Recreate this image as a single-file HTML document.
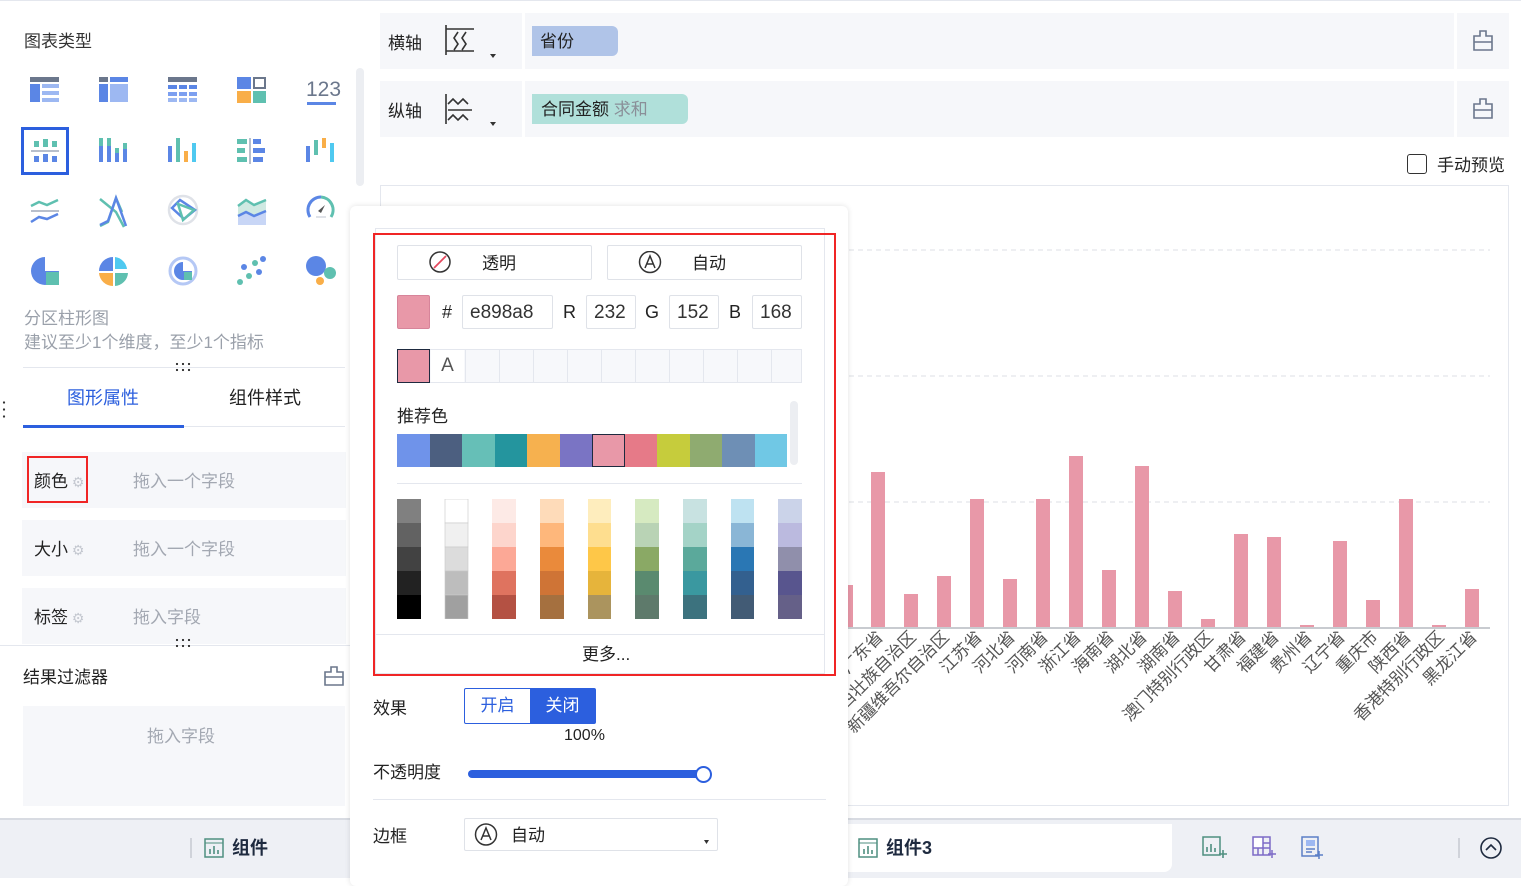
<!DOCTYPE html>
<html><head><meta charset="utf-8"><style>
*{margin:0;padding:0;box-sizing:border-box}
body{width:1521px;height:878px;overflow:hidden;background:#fff;font-family:"Liberation Sans","Noto Sans CJK SC",sans-serif;color:#222;position:relative;font-size:16px}
.a{position:absolute}
.g{color:#9aa0aa}
.inp{position:absolute;border:1px solid #dfe2e8;border-radius:2px;background:#fff;font-size:19px;color:#333;padding-left:7px;line-height:34px;height:34px}
.sw{position:absolute;width:33px;height:34px}
.dots{position:absolute;width:18px;height:12px;background:radial-gradient(circle,#333 1px,transparent 1.3px) 0 0/6px 6px}
</style></head><body>
<div class="a" style="left:0;top:0;width:1521px;height:1px;background:#e4e7ee"></div>
<div class="a" style="left:24px;top:27px;font-size:17px;color:#333">图表类型</div>
<div class="a" style="left:356px;top:68px;width:8px;height:118px;border-radius:4px;background:#eceef2"></div>
<svg class="a" style="left:0;top:60px" width="350" height="240">
<g transform="translate(30,17)"><rect width="29" height="5" fill="#6b778c"/><rect y="7" width="10" height="18" fill="#5b86e5"/><rect x="12" y="7" width="17" height="4" fill="#9db8f2"/><rect x="12" y="14" width="17" height="4" fill="#9db8f2"/><rect x="12" y="21" width="17" height="4" fill="#9db8f2"/></g>
<g transform="translate(99,17)"><rect width="9" height="5" fill="#6b778c"/><rect x="11" width="18" height="5" fill="#5b86e5"/><rect y="7" width="9" height="18" fill="#5b86e5"/><rect x="11" y="7" width="18" height="18" fill="#9db8f2"/></g>
<g transform="translate(168,17)"><rect width="29" height="5" fill="#6b778c"/><rect y="8" width="29" height="4" fill="#5b86e5"/><rect y="15" width="29" height="4" fill="#7c9ff0"/><rect y="21" width="29" height="4" fill="#9db8f2"/><rect x="9" y="7" width="2" height="18" fill="#fff"/><rect x="19" y="7" width="2" height="18" fill="#fff"/></g>
<g transform="translate(237,17)"><rect width="14" height="12" fill="#5b86e5"/><rect x="17" y="1" width="11" height="10" fill="none" stroke="#6b778c" stroke-width="2"/><rect y="14" width="14" height="12" fill="#f9ae48"/><rect x="16" y="14" width="13" height="12" fill="#5fc0b0"/></g>
<text x="306" y="36" font-size="21" fill="#6b778c" font-family="Liberation Sans">123</text><rect x="307" y="42" width="29" height="3" fill="#5b86e5"/>
<rect x="22.5" y="68.5" width="45" height="45" fill="none" stroke="#2c5fde" stroke-width="3"/>
<g transform="translate(31,79)"><rect x="3" y="2" width="5" height="6" fill="#5fc0b0"/><rect x="12" y="0" width="5" height="8" fill="#5fc0b0"/><rect x="21" y="2" width="5" height="6" fill="#5fc0b0"/><rect y="11" width="28" height="2" fill="#b8bfcc"/><rect x="3" y="17" width="5" height="6" fill="#5b86e5"/><rect x="12" y="15" width="5" height="8" fill="#5b86e5"/><rect x="21" y="17" width="5" height="6" fill="#5b86e5"/></g>
<g transform="translate(99,78)"><rect width="4" height="24" fill="#5b86e5"/><rect width="4" height="8" fill="#5fc0b0"/><rect x="8" y="0" width="4" height="24" fill="#5b86e5"/><rect x="8" width="4" height="8" fill="#5fc0b0"/><rect x="16" y="10" width="4" height="14" fill="#5b86e5"/><rect x="16" y="10" width="4" height="5" fill="#5fc0b0"/><rect x="24" y="5" width="4" height="19" fill="#5b86e5"/><rect x="24" y="5" width="4" height="6" fill="#5fc0b0"/></g>
<g transform="translate(168,78)"><rect y="8" width="4" height="16" fill="#5b86e5"/><rect x="8" width="4" height="24" fill="#5fc0b0"/><rect x="16" y="13" width="4" height="11" fill="#f9ae48"/><rect x="24" y="5" width="4" height="19" fill="#4fc9f0"/></g>
<g transform="translate(237,79)"><rect width="10" height="5" fill="#5fc0b0"/><rect x="16" width="8" height="5" fill="#5b86e5"/><rect y="9" width="8" height="5" fill="#5fc0b0"/><rect x="16" y="9" width="12" height="5" fill="#5b86e5"/><rect y="18" width="10" height="5" fill="#5fc0b0"/><rect x="16" y="18" width="10" height="5" fill="#5b86e5"/><rect x="12" y="-1" width="2" height="26" fill="#b8bfcc"/></g>
<g transform="translate(306,78)"><rect y="8" width="4" height="16" fill="#5b86e5"/><rect x="8" y="2" width="4" height="15" fill="#5fc0b0"/><rect x="16" width="4" height="10" fill="#f9ae48"/><rect x="24" y="5" width="4" height="19" fill="#4fc9f0"/></g>
<g fill="none" stroke-width="2.5"><path d="M31 146l8-4 8 3 11-5" stroke="#5fc0b0"/><rect x="31" y="150" width="28" height="2" fill="#b8bfcc" stroke="none"/><path d="M31 162l8-5 8 2 11-5" stroke="#5b86e5"/>
<path d="M100 139l16 13 8 15M100 166l8-4 8-24 6 14" stroke="#5fc0b0"/><path d="M100 165l8-4 8-23 10 28" stroke="#5b86e5"/>
<circle cx="183" cy="150" r="14" stroke="#dfe2e8"/><path d="M172 148l8-8 15 10-11 9z" stroke="#5b86e5"/><path d="M178 144l16 6-11 10z" stroke="#5fc0b0"/>
<path d="M321 137a13 13 0 0 0-11 20" stroke="#5b86e5" stroke-width="3"/><path d="M321 137a13 13 0 0 1 10 20" stroke="#5fc0b0" stroke-width="3"/></g>
<path d="M318 151l7-6-4 8z" fill="#555"/><rect x="316" y="156" width="10" height="2" fill="#dfe2e8"/>
<path d="M238 146l8-6 8 5 12-5v22h-28z" fill="#cfe9e2"/><path d="M238 156l8-4 8 4 12-5v14h-28z" fill="#c8d6f6"/><path d="M238 146l8-6 8 5 12-5" stroke="#5fc0b0" stroke-width="2.5" fill="none"/><path d="M238 156l8-4 8 4 12-5" stroke="#5b86e5" stroke-width="2.5" fill="none"/>
<path d="M45 197a14 14 0 1 0 14 14h-14z" fill="#5b86e5"/><rect x="46" y="212" width="13" height="13" fill="#5fc0b0"/>
<path d="M113 197a14 14 0 0 0-14 14h14z" fill="#5b86e5"/><path d="M115 197a14 14 0 0 1 12 12h-12z" fill="#4fc9f0"/><path d="M99 213a14 14 0 0 0 14 13v-13z" fill="#f9ae48"/><path d="M115 213h13a14 14 0 0 1-13 13z" fill="#5fc0b0"/>
<circle cx="183" cy="211" r="13" fill="none" stroke="#b5c8f5" stroke-width="3"/><path d="M183 202a9 9 0 1 0 9 9h-9z" fill="#5b86e5"/><rect x="184" y="212" width="8" height="8" fill="#5fc0b0"/>
<g fill="#5b86e5"><circle cx="263" cy="199" r="3"/><circle cx="244" cy="207" r="3"/><circle cx="259" cy="212" r="3"/></g><g fill="#5fc0b0"><circle cx="255" cy="203" r="3"/><circle cx="249" cy="216" r="3"/><circle cx="240" cy="222" r="3"/></g>
<circle cx="316" cy="206" r="10" fill="#5b86e5"/><circle cx="330" cy="213" r="6" fill="#5fc0b0"/><circle cx="320" cy="221" r="4" fill="#f9ae48"/>
</svg>
<div class="a" style="left:24px;top:307px;color:#9aa0aa;font-size:17px;line-height:24px">分区柱形图<br>建议至少1个维度，至少1个指标</div>
<div class="dots" style="left:174px;top:361px"></div>
<div class="a" style="left:23px;top:367px;width:322px;height:1px;background:#e4e7ee"></div>
<div class="a" style="left:2px;top:399px;width:4px;height:20px;background:radial-gradient(circle,#333 1px,transparent 1.3px) 0 0/4px 7px"></div>
<div class="a" style="left:67px;top:384px;font-size:18px;color:#2c5fde">图形属性</div>
<div class="a" style="left:229px;top:384px;font-size:18px;color:#222">组件样式</div>
<div class="a" style="left:23px;top:426px;width:322px;height:1px;background:#e4e7ee"></div>
<div class="a" style="left:23px;top:425px;width:161px;height:3px;background:#2c5fde"></div>
<div class="a" style="left:22px;top:452px;width:324px;height:56px;background:#f6f7fa"></div>
<div class="a" style="left:27px;top:456px;width:61px;height:47px;border:2px solid #f02525"></div>
<div class="a" style="left:34px;top:467px;font-size:17px">颜色<span style="color:#c4c8d0;font-size:14px"> ⚙</span></div>
<div class="a g" style="left:133px;top:467px;font-size:17px;color:#a3a8b2">拖入一个字段</div>
<div class="a" style="left:22px;top:520px;width:324px;height:56px;background:#f6f7fa"></div>
<div class="a" style="left:34px;top:535px;font-size:17px">大小<span style="color:#c4c8d0;font-size:14px"> ⚙</span></div>
<div class="a g" style="left:133px;top:535px;font-size:17px;color:#a3a8b2">拖入一个字段</div>
<div class="a" style="left:22px;top:588px;width:324px;height:56px;background:#f6f7fa"></div>
<div class="a" style="left:34px;top:603px;font-size:17px">标签<span style="color:#c4c8d0;font-size:14px"> ⚙</span></div>
<div class="a g" style="left:133px;top:603px;font-size:17px;color:#a3a8b2">拖入字段</div>
<div class="a" style="left:0;top:645px;width:350px;height:1px;background:#e4e7ee"></div>
<div class="dots" style="left:174px;top:637px"></div>
<div class="a" style="left:23px;top:663px;font-size:17px">结果过滤器</div>
<svg class="a" style="left:324px;top:666px" width="20" height="20"><path d="M7 1h6v5h6v13H1V6h6zM1 11h18" fill="none" stroke="#6b778c" stroke-width="1.6"/></svg>
<div class="a" style="left:23px;top:706px;width:322px;height:100px;background:#f6f7fa"></div>
<div class="a" style="left:147px;top:722px;font-size:17px;color:#a3a8b2">拖入字段</div>
<div class="a" style="left:380px;top:13px;width:1129px;height:56px;background:#f6f7fa"></div>
<div class="a" style="left:522px;top:13px;width:3px;height:56px;background:#fff"></div>
<div class="a" style="left:1454px;top:13px;width:3px;height:56px;background:#fff"></div>
<div class="a" style="left:388px;top:29px;font-size:17px">横轴</div>
<svg class="a" style="left:440px;top:24px" width="60" height="40"><path d="M6 1v30M6 5h28M6 27h28M18 8l-4 6 4 6-4 6M26 8l-4 6 4 6-4 6" fill="none" stroke="#333" stroke-width="1.6"/><path d="M50 30h6l-3 4z" fill="#333"/></svg>
<div class="a" style="left:532px;top:26px;width:86px;height:30px;background:#b0c4e8;border-radius:0 6px 6px 0;font-size:17px;padding:1px 8px">省份</div>
<svg class="a" style="left:1472px;top:30px" width="22" height="22"><path d="M8 1h6v5h6v14H2V6h6zM2 12h18" fill="none" stroke="#6b778c" stroke-width="1.6"/></svg>
<div class="a" style="left:380px;top:81px;width:1129px;height:56px;background:#f6f7fa"></div>
<div class="a" style="left:522px;top:81px;width:3px;height:56px;background:#fff"></div>
<div class="a" style="left:1454px;top:81px;width:3px;height:56px;background:#fff"></div>
<div class="a" style="left:388px;top:97px;font-size:17px">纵轴</div>
<svg class="a" style="left:440px;top:92px" width="60" height="40"><path d="M6 2v30M8 12l5-5 5 5 5-5 5 5M8 18h24M8 28l5-5 5 5 5-5 5 5" fill="none" stroke="#333" stroke-width="1.6"/><path d="M50 30h6l-3 4z" fill="#333"/></svg>
<div class="a" style="left:532px;top:94px;width:156px;height:30px;background:#b0e0da;border-radius:0 6px 6px 0;font-size:17px;padding:1px 9px">合同金额 <span style="color:#8a8f98">求和</span></div>
<svg class="a" style="left:1472px;top:98px" width="22" height="22"><path d="M8 1h6v5h6v14H2V6h6zM2 12h18" fill="none" stroke="#6b778c" stroke-width="1.6"/></svg>
<div class="a" style="left:1407px;top:154px;width:20px;height:20px;border:1.5px solid #333;border-radius:3px"></div>
<div class="a" style="left:1437px;top:151px;font-size:17px">手动预览</div>
<div class="a" style="left:380px;top:185px;width:1129px;height:621px;border:1px solid #e4e7ee"></div>
<svg class="a" style="left:840px;top:200px" width="660" height="560" font-family="Liberation Sans, Noto Sans CJK SC, sans-serif" font-size="17" fill="#555">
<g stroke="#dcdfe4" stroke-dasharray="5 4"><line x1="0" y1="50" x2="650" y2="50"/><line x1="0" y1="176" x2="650" y2="176"/><line x1="0" y1="302" x2="650" y2="302"/></g>
<g fill="#e898a8">
<rect x="6" y="385" width="7" height="43"/>
<rect x="31" y="272" width="14" height="156"/><rect x="64" y="394" width="14" height="34"/><rect x="97" y="376" width="14" height="52"/><rect x="130" y="299" width="14" height="129"/><rect x="163" y="379" width="14" height="49"/><rect x="196" y="299" width="14" height="129"/><rect x="229" y="256" width="14" height="172"/><rect x="262" y="370" width="14" height="58"/><rect x="295" y="266" width="14" height="162"/><rect x="328" y="391" width="14" height="37"/><rect x="361" y="419" width="14" height="9"/><rect x="394" y="334" width="14" height="94"/><rect x="427" y="337" width="14" height="91"/><rect x="460" y="425" width="14" height="3"/><rect x="493" y="341" width="14" height="87"/><rect x="526" y="400" width="14" height="28"/><rect x="559" y="299" width="14" height="129"/><rect x="592" y="425" width="14" height="3"/><rect x="625" y="389" width="14" height="39"/>
</g>
<line x1="0" y1="428" x2="650" y2="428" stroke="#c8cbd0" stroke-width="2"/>
<g text-anchor="end">
<text transform="translate(44,438) rotate(-45)">广东省</text>
<text transform="translate(77,438) rotate(-45)">广西壮族自治区</text>
<text transform="translate(110,438) rotate(-45)">新疆维吾尔自治区</text>
<text transform="translate(143,438) rotate(-45)">江苏省</text>
<text transform="translate(176,438) rotate(-45)">河北省</text>
<text transform="translate(209,438) rotate(-45)">河南省</text>
<text transform="translate(242,438) rotate(-45)">浙江省</text>
<text transform="translate(275,438) rotate(-45)">海南省</text>
<text transform="translate(308,438) rotate(-45)">湖北省</text>
<text transform="translate(341,438) rotate(-45)">湖南省</text>
<text transform="translate(374,438) rotate(-45)">澳门特别行政区</text>
<text transform="translate(407,438) rotate(-45)">甘肃省</text>
<text transform="translate(440,438) rotate(-45)">福建省</text>
<text transform="translate(473,438) rotate(-45)">贵州省</text>
<text transform="translate(506,438) rotate(-45)">辽宁省</text>
<text transform="translate(539,438) rotate(-45)">重庆市</text>
<text transform="translate(572,438) rotate(-45)">陕西省</text>
<text transform="translate(605,438) rotate(-45)">香港特别行政区</text>
<text transform="translate(638,438) rotate(-45)">黑龙江省</text>
</g>
</svg>
<div class="a" style="left:0;top:818px;width:1521px;height:60px;background:#eef0f5;border-top:2px solid #d8dbe2"></div>
<div class="a" style="left:848px;top:824px;width:324px;height:48px;background:#fff;border-radius:0 0 8px 0"></div>
<div class="a" style="left:190px;top:838px;width:2px;height:20px;background:#d0d3da"></div>
<svg class="a" style="left:204px;top:838px" width="20" height="20"><rect x="1" y="1" width="18" height="18" fill="none" stroke="#4f8f80" stroke-width="1.5"/><path d="M1 5h18" stroke="#4f8f80"/><path d="M6 16v-5M10 16v-8M14 16v-4" stroke="#4f8f80" stroke-width="1.6"/></svg>
<div class="a" style="left:232px;top:834px;font-size:18px;font-weight:bold;color:#1e2a3f">组件</div>
<svg class="a" style="left:858px;top:838px" width="20" height="20"><rect x="1" y="1" width="18" height="18" fill="none" stroke="#4f8f80" stroke-width="1.5"/><path d="M1 5h18" stroke="#4f8f80"/><path d="M6 16v-5M10 16v-8M14 16v-4" stroke="#4f8f80" stroke-width="1.6"/></svg>
<div class="a" style="left:886px;top:834px;font-size:18px;font-weight:bold;color:#1e2a3f">组件3</div>
<svg class="a" style="left:1202px;top:834px" width="130" height="28">
<rect x="1" y="3" width="17" height="18" fill="none" stroke="#4f8f80" stroke-width="1.5"/><path d="M5 18v-5M9 18v-8M13 18v-4M17 20h8M21 16v8" stroke="#4f8f80" stroke-width="1.6"/>
<rect x="51" y="3" width="17" height="18" fill="none" stroke="#7d6bc7" stroke-width="1.5"/><rect x="52" y="4" width="9" height="10" fill="#fff"/><path d="M61 3v18M51 14h17M56 14v7M61 9h7M66 20h8M70 16v8" stroke="#7d6bc7" stroke-width="1.5"/>
<rect x="100" y="3" width="16" height="19" fill="none" stroke="#5b7fc7" stroke-width="1.5"/><rect x="104" y="6" width="9" height="6" fill="#9db8f2"/><path d="M104 15h9M104 18h6M113 21h8M117 17v8" stroke="#5b7fc7" stroke-width="1.5"/>
</svg>
<div class="a" style="left:1458px;top:838px;width:2px;height:20px;background:#d0d3da"></div>
<svg class="a" style="left:1479px;top:836px" width="24" height="24"><circle cx="12" cy="12" r="10" fill="none" stroke="#1e2a3f" stroke-width="1.6"/><path d="M7 14l5-5 5 5" fill="none" stroke="#1e2a3f" stroke-width="1.6"/></svg>
<div class="a" style="left:350px;top:206px;width:498px;height:680px;background:#fff;border-radius:6px;box-shadow:0 0 6px rgba(0,0,0,.12)"></div>
<div class="a" style="left:375px;top:228px;width:450px;height:446px;border:1px solid #e4e7ee"></div>
<div class="a" style="left:373px;top:233px;width:463px;height:443px;border:2px solid #f02525"></div>
<div class="a" style="left:397px;top:245px;width:195px;height:35px;border:1px solid #dfe2e8;border-radius:2px"></div>
<svg class="a" style="left:429px;top:251px" width="24" height="24"><circle cx="11" cy="11" r="10" fill="none" stroke="#333" stroke-width="1.5"/><path d="M5 17L17 5" stroke="#e4485e" stroke-width="1.8"/></svg>
<div class="a" style="left:482px;top:249px;font-size:17px">透明</div>
<div class="a" style="left:607px;top:245px;width:195px;height:35px;border:1px solid #dfe2e8;border-radius:2px"></div>
<svg class="a" style="left:638px;top:251px" width="24" height="24"><circle cx="12" cy="11" r="10.5" fill="none" stroke="#333" stroke-width="1.5"/><path d="M7 17l5-12 5 12M8.5 13h7" fill="none" stroke="#333" stroke-width="1.5"/></svg>
<div class="a" style="left:692px;top:249px;font-size:17px">自动</div>
<div class="sw" style="left:397px;top:295px;background:#e898a8;border:1px solid #d7849a;border-radius:2px"></div>
<div class="a" style="left:442px;top:302px;font-size:18px">#</div>
<div class="inp" style="left:462px;top:295px;width:91px">e898a8</div>
<div class="a" style="left:563px;top:302px;font-size:18px">R</div>
<div class="inp" style="left:586px;top:295px;width:50px">232</div>
<div class="a" style="left:645px;top:302px;font-size:18px">G</div>
<div class="inp" style="left:669px;top:295px;width:50px">152</div>
<div class="a" style="left:729px;top:302px;font-size:18px">B</div>
<div class="inp" style="left:752px;top:295px;width:50px">168</div>
<div class="a" style="left:397px;top:349px;width:405px;height:34px;border:1px solid #e4e7ee;background:repeating-linear-gradient(90deg,#f7f8fb 0 33px,#e4e7ee 33px 34px)"></div>
<div class="sw" style="left:397px;top:349px;background:#e898a8;border:1.5px solid #1e2a3f"></div>
<div class="a" style="left:431px;top:350px;width:33px;height:32px;background:#fff;font-size:19px;color:#555;text-align:center;line-height:32px">A</div>
<div class="a" style="left:397px;top:402px;font-size:17px">推荐色</div>
<div class="a" style="left:790px;top:401px;width:8px;height:64px;border-radius:4px;background:#eceef2"></div>
<div class="a" style="left:397px;top:434px;width:390px;height:33px;display:flex">
<div style="flex:1;background:#6f93ea"></div><div style="flex:1;background:#4c5f80"></div><div style="flex:1;background:#66bfb7"></div><div style="flex:1;background:#24959e"></div><div style="flex:1;background:#f6b14f"></div><div style="flex:1;background:#7a74c4"></div><div style="flex:1;background:#e898a8;outline:1px solid #1e2a3f;outline-offset:-1px"></div><div style="flex:1;background:#e67a88"></div><div style="flex:1;background:#c6cc3c"></div><div style="flex:1;background:#8fab70"></div><div style="flex:1;background:#6e8fb5"></div><div style="flex:1;background:#70c8e5"></div></div>
<div class="a" style="left:397px;top:483px;width:405px;height:1px;background:#e4e7ee"></div>
<svg class="a" style="left:397px;top:499px" width="406" height="120">
<g><rect y="0" width="24" height="24" fill="#808080"/><rect y="24" width="24" height="24" fill="#626262"/><rect y="48" width="24" height="24" fill="#424242"/><rect y="72" width="24" height="24" fill="#222"/><rect y="96" width="24" height="24" fill="#000"/></g>
<g transform="translate(48,0)" stroke="#c8c8c8" stroke-width=".6"><rect y="0" width="23" height="24" fill="#fff"/><rect y="24" width="23" height="24" fill="#f0f0f0"/><rect y="48" width="23" height="24" fill="#dcdcdc"/><rect y="72" width="23" height="24" fill="#bdbdbd"/><rect y="96" width="23" height="24" fill="#a0a0a0"/></g>
<g transform="translate(95,0)"><rect width="24" height="24" fill="#fdeae6"/><rect y="24" width="24" height="24" fill="#fdd5cc"/><rect y="48" width="24" height="24" fill="#fca896"/><rect y="72" width="24" height="24" fill="#df735f"/><rect y="96" width="24" height="24" fill="#b45143"/></g>
<g transform="translate(143,0)"><rect width="24" height="24" fill="#fedbb9"/><rect y="24" width="24" height="24" fill="#feb77b"/><rect y="48" width="24" height="24" fill="#ea8a3b"/><rect y="72" width="24" height="24" fill="#cf7436"/><rect y="96" width="24" height="24" fill="#a5703f"/></g>
<g transform="translate(191,0)"><rect width="23" height="24" fill="#feedbd"/><rect y="24" width="23" height="24" fill="#fede8f"/><rect y="48" width="23" height="24" fill="#fec748"/><rect y="72" width="23" height="24" fill="#e6b43b"/><rect y="96" width="23" height="24" fill="#ab945e"/></g>
<g transform="translate(238,0)"><rect width="24" height="24" fill="#d6eac1"/><rect y="24" width="24" height="24" fill="#b9d3b5"/><rect y="48" width="24" height="24" fill="#8aa965"/><rect y="72" width="24" height="24" fill="#5a8a6f"/><rect y="96" width="24" height="24" fill="#5e7a6b"/></g>
<g transform="translate(286,0)"><rect width="24" height="24" fill="#c8e2e1"/><rect y="24" width="24" height="24" fill="#a4d3c7"/><rect y="48" width="24" height="24" fill="#5ba99b"/><rect y="72" width="24" height="24" fill="#3a98a0"/><rect y="96" width="24" height="24" fill="#3c727e"/></g>
<g transform="translate(334,0)"><rect width="23" height="24" fill="#bee2f1"/><rect y="24" width="23" height="24" fill="#8ab6d6"/><rect y="48" width="23" height="24" fill="#2a77b4"/><rect y="72" width="23" height="24" fill="#33608f"/><rect y="96" width="23" height="24" fill="#425b75"/></g>
<g transform="translate(381,0)"><rect width="24" height="24" fill="#cbd3e9"/><rect y="24" width="24" height="24" fill="#bbbadf"/><rect y="48" width="24" height="24" fill="#908fab"/><rect y="72" width="24" height="24" fill="#58558e"/><rect y="96" width="24" height="24" fill="#656088"/></g>
</svg>
<div class="a" style="left:375px;top:634px;width:450px;height:1px;background:#e4e7ee"></div>
<div class="a" style="left:582px;top:640px;font-size:17px">更多...</div>
<div class="a" style="left:373px;top:694px;font-size:17px">效果</div>
<div class="a" style="left:464px;top:688px;width:132px;height:36px;border:1px solid #2c5fde;border-radius:2px;display:flex;font-size:17px;line-height:34px">
<div style="flex:1;color:#2c5fde;text-align:center">开启</div><div style="flex:1;background:#2c5fde;color:#fff;text-align:center">关闭</div></div>
<div class="a" style="left:564px;top:727px;font-size:16px">100%</div>
<div class="a" style="left:373px;top:758px;font-size:17px">不透明度</div>
<div class="a" style="left:468px;top:770px;width:238px;height:8px;border-radius:4px;background:#2c5fde"></div>
<div class="a" style="left:695px;top:766px;width:17px;height:17px;border-radius:50%;background:#fff;border:2.5px solid #2c5fde"></div>
<div class="a" style="left:373px;top:799px;width:453px;height:1px;background:#e4e7ee"></div>
<div class="a" style="left:373px;top:822px;font-size:17px">边框</div>
<div class="a" style="left:464px;top:818px;width:254px;height:33px;border:1px solid #dfe2e8;border-radius:2px"></div>
<svg class="a" style="left:474px;top:823px" width="24" height="24"><circle cx="12" cy="11.5" r="10.5" fill="none" stroke="#333" stroke-width="1.5"/><path d="M7 17l5-12 5 12M8.5 13h7" fill="none" stroke="#333" stroke-width="1.5"/></svg>
<div class="a" style="left:511px;top:821px;font-size:17px">自动</div>
<svg class="a" style="left:703px;top:839px" width="8" height="6"><path d="M1 1h5l-2.5 4z" fill="#333"/></svg>
</body></html>
